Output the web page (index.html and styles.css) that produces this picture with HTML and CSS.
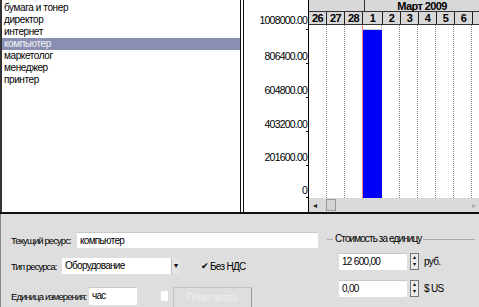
FILE: index.html
```html
<!DOCTYPE html>
<html>
<head>
<meta charset="utf-8">
<link rel="stylesheet" href="styles.css">
</head>
<body>
<div class="app">
  <div class="top">
    <div class="list">
      <div class="item">бумага и тонер</div>
      <div class="item">директор</div>
      <div class="item">интернет</div>
      <div class="item sel">компьютер</div>
      <div class="item">маркетолог</div>
      <div class="item">менеджер</div>
      <div class="item">принтер</div>
    </div>
    <div class="chartpane">
      <div class="axis">
        <div class="ylab" style="top:14px">1008000.00</div>
        <div class="ylab" style="top:50px">806400.00</div>
        <div class="ylab" style="top:84px">604800.00</div>
        <div class="ylab" style="top:118px">403200.00</div>
        <div class="ylab" style="top:151px">201600.00</div>
        <div class="ylab" style="top:184px">0</div>
        <div class="tick" style="top:29px"></div>
        <div class="tick" style="top:63px"></div>
        <div class="tick" style="top:97px"></div>
        <div class="tick" style="top:131px"></div>
        <div class="tick" style="top:165px"></div>
        <div class="tick" style="top:197px"></div>
      </div>
      <div class="chart">
        <div class="months">
          <div class="month feb"></div>
          <div class="month mar">Март 2009</div>
        </div>
        <div class="days">
          <div class="day">26</div><div class="day">27</div><div class="day">28</div><div class="day first">1</div><div class="day">2</div><div class="day">3</div><div class="day">4</div><div class="day">5</div><div class="day">6</div><div class="day"></div>
        </div>
        <div class="body">
          <div class="col"></div><div class="col"></div><div class="col"></div><div class="col first"><div class="bar"></div></div><div class="col"></div><div class="col"></div><div class="col"></div><div class="col"></div><div class="col"></div><div class="col"></div>
        </div>
        <div class="hscroll">
          <span class="arr">◂</span>
          <span class="thumb"></span>
          <span class="arr r">▸</span>
        </div>
      </div>
    </div>
  </div>
  <div class="bottom">
    <div class="form">
      <div class="row r1">
        <span class="lbl">Текущий ресурс:</span>
        <span class="input wide">компьютер</span>
      </div>
      <div class="row r2">
        <span class="lbl">Тип ресурса:</span>
        <span class="select">Оборудование<span class="dd">▾</span></span>
        <span class="chk on">✔</span><span class="chklbl">Без НДС</span>
      </div>
      <div class="row r3">
        <span class="lbl">Единица измерения:</span>
        <span class="input unit">час</span>
        <span class="chk off"></span>
        <span class="btn">Пересчитать</span>
      </div>
    </div>
    <div class="group">
      <div class="legend">Стоимость за единицу</div>
      <div class="prow">
        <span class="input num">12 600,00</span>
        <span class="spin"><span>▴</span><span>▾</span></span>
        <span class="cur">руб.</span>
      </div>
      <div class="prow">
        <span class="input num">0,00</span>
        <span class="spin"><span>▴</span><span>▾</span></span>
        <span class="cur">$ US</span>
      </div>
    </div>
  </div>
</div>
</body>
</html>
```

FILE: styles.css
```css
* { box-sizing: border-box; }
html, body { margin: 0; padding: 0; }
body {
  width: 479px; height: 307px; overflow: hidden;
  background: #dedede;
  font-family: "Liberation Sans", Arial, sans-serif;
  font-size: 10px;
  letter-spacing: -0.7px;
  color: #000;
}
.app { width: 479px; height: 307px; display: flex; flex-direction: column; }
.top {
  height: 214px; flex: none; display: flex; background: #fff;
  border-bottom: 2px solid #111;
}
.list {
  width: 241px; flex: none; height: 212px;
  border-left: 2px solid #333;
  border-right: 1px solid #111;
  padding-top: 2px;
  letter-spacing: -0.4px;
}
.item { height: 12px; line-height: 12px; padding-left: 2px; white-space: nowrap; }
.item.sel { background: #8a8eb2; color: #f4f4f8; }
.chartpane {
  flex: 1; min-width: 0; display: flex; margin-left: 2px;
  border-left: 1px solid #111;
}
.axis { width: 64px; flex: none; position: relative; }
.ylab { position: absolute; right: 1px; height: 12px; line-height: 12px; font-size: 10.5px; letter-spacing: -0.8px; }
.tick { position: absolute; right: 0; width: 2px; height: 1px; background: #000; }
.chart { flex: 1; display: flex; flex-direction: column; border-left: 1px solid #000; min-width: 0; overflow: hidden; }
.months { height: 12px; flex: none; display: flex; background: #d8d8d8; border-bottom: 1px solid #333; }
.month { height: 11px; line-height: 12px; text-align: center; font-weight: bold; font-size: 11px; letter-spacing: -0.6px; }
.month.feb { width: 56px; flex: none; border-right: 1px solid #333; }
.month.mar { flex: 1; }
.days { height: 13px; flex: none; display: flex; background: #d8d8d8; border-bottom: 1px solid #333; }
.day { width: 18px; flex: none; line-height: 12px; text-align: center; font-weight: bold; font-size: 11px; letter-spacing: -0.5px; border-right: 1px solid #222; }
.day.first { width: 20px; }
.body { flex: 1; display: flex; background: #fff; }
.col { width: 18px; flex: none; border-right: 1px dotted #888; position: relative; }
.col.first { width: 20px; border-left: 1px solid #e88; margin-left: -1px; }
.bar { position: absolute; left: 0; right: -1px; top: 4px; bottom: 0; background: #0000f6; border-top: 1px solid #ccd; }
.hscroll {
  height: 14px; flex: none; display: flex; align-items: center; background: #dadada;
  padding: 0 4px; font-size: 8px;
}
.arr { width: 8px; color: #222; }
.arr.r { margin-left: auto; text-align: right; color: #aaa; }
.thumb { width: 10px; height: 12px; background: #d4d4d4; border: 1px solid #999; margin-left: 5px; }
.bottom { flex: 1; display: flex; border-left: 1px solid #888; }
.form { width: 322px; flex: none; padding-left: 10px; }
.row { display: flex; align-items: center; height: 16px; white-space: nowrap; }
.r1 { margin-top: 18px; }
.r2 { margin-top: 10px; }
.r3 { margin-top: 13px; height: 18px; }
.lbl { flex: none; font-size: 9.5px; letter-spacing: -0.9px; overflow: hidden; }
.r1 .lbl { width: 66px; }
.r2 .lbl { width: 51px; }
.r3 .lbl { width: 78px; }
.input { background: #fff; height: 16px; line-height: 16px; padding-left: 3px; border-top: 1px solid #c8c8c8; flex: none; }
.wide { width: 241px; }
.unit { width: 48px; height: 18px; }
.select { width: 118px; flex: none; height: 16px; line-height: 16px; background: #fff; padding-left: 3px; position: relative; }
.dd { position: absolute; right: 0; top: 0; width: 9px; height: 16px; background: #e4e4e4; border-left: 1px solid #bbb; font-size: 8px; text-align: center; letter-spacing: 0; }
.chk { width: 7px; height: 10px; margin-left: 21px; font-size: 9px; line-height: 10px; flex: none; }
.chk.off { background: #fff; margin-left: 24px; }
.chklbl { margin-left: 2px; }
.btn { margin-left: 5px; width: 79px; height: 21px; margin-top: 2px; border: 1px solid #c4c4c4; border-right-color: #999; color: #eee; text-align: center; line-height: 20px; flex: none; }
.group {
  width: 148px; height: 70px; margin-top: 25px; margin-left: 4px;
  border-top: 1px solid #aaa; position: relative; padding-left: 12px; padding-top: 13px;
}
.legend { position: absolute; top: -7px; left: 6px; background: #dedede; padding: 0 2px; line-height: 12px; letter-spacing: -0.9px; }
.prow { display: flex; align-items: center; height: 17px; margin-bottom: 10px; }
.num { width: 68px; height: 17px; }
.spin { width: 9px; height: 17px; margin-left: 3px; background: #ececec; border: 1px solid #777; display: flex; flex-direction: column; font-size: 6px; line-height: 7px; text-align: center; letter-spacing: 0; }
.cur { margin-left: 5px; }
```
